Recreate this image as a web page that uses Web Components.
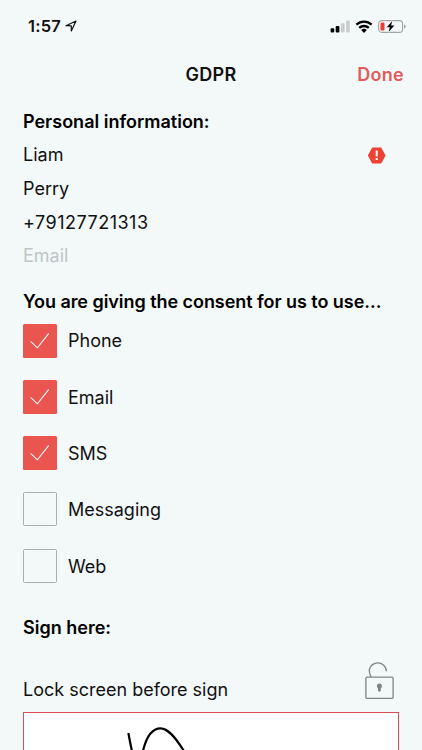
<!DOCTYPE html>
<html lang="en">
<head>
<meta charset="utf-8">
<title>GDPR</title>
<style>
  html, body {
    margin: 0;
    height: 750px;
    overflow: hidden;
    background: #f3f8f9;
  }
</style>
</head>
<body>
<gdpr-screen></gdpr-screen>

<script>
class StatusBar extends HTMLElement {
  constructor() {
    super();
    this.attachShadow({ mode: "open" });
  }

  static get styles() {
    return /* css */`
      :host {
        display: flex;
        justify-content: space-between;
        height: 52px;
        padding: 0 16px 0 28px;
        box-sizing: border-box;
        font-size: 16.5px;
        font-weight: 600;
        letter-spacing: 0.2px;
      }

      .time, .icons {
        display: flex;
        align-items: center;
      }

      .time { gap: 4px; }
      .icons { gap: 5px; }
      svg { display: block; }
    `;
  }

  connectedCallback() {
    this.render();
  }

  render() {
    this.shadowRoot.innerHTML = /* html */`
    <style>${StatusBar.styles}</style>
    <div class="time">
      <span>1:57</span>
      <svg width="12" height="12" viewBox="0 0 12 12" fill="none" stroke="#111" stroke-width="1.2" stroke-linejoin="round">
        <path d="M1 5.7 11 1 6.3 11V5.8Z"/>
      </svg>
    </div>
    <div class="icons">
      <svg width="20" height="13" viewBox="0 0 20 13">
        <rect x="0.6" y="8.3" width="3.6" height="4.2" rx="1"/>
        <rect x="5.7" y="6" width="3.7" height="6.5" rx="1"/>
        <rect x="10.9" y="3.3" width="3.7" height="9.2" rx="1" fill="#c9cdce"/>
        <rect x="16.1" y="0.5" width="3.7" height="12" rx="1" fill="#c9cdce"/>
      </svg>
      <svg width="18" height="13" viewBox="0 0 18 13" fill="none" stroke="#000" stroke-width="2.3">
        <path d="M1.4 4.7a11 11 0 0 1 15.2 0"/>
        <path d="M4.2 7.9a7 7 0 0 1 9.6 0"/>
        <path d="M6.2 10.1a4.1 4.1 0 0 1 5.6 0L9 12.9Z" fill="#000" stroke="none"/>
      </svg>
      <svg width="28" height="13" viewBox="0 0 28 13">
        <rect x="0.6" y="0.6" width="24" height="11.8" rx="3.4" fill="none" stroke="#a0a4a5" stroke-width="1.1"/>
        <path d="M26 4.4q1.7.6 1.7 2.1T26 8.6Z" fill="#a0a4a5"/>
        <rect x="2.5" y="2.5" width="4" height="8" rx="1.2" fill="#f23a31"/>
        <path d="M14.2.9 8.8 7.3h3l-1.1 4.8 5.6-6.6h-3.2Z" stroke="#f3f8f9" stroke-width="1.6" paint-order="stroke"/>
      </svg>
    </div>`;
  }
}

class NavBar extends HTMLElement {
  constructor() {
    super();
    this.attachShadow({ mode: "open" });
  }

  static get styles() {
    return /* css */`
      :host {
        display: grid;
        grid-template-columns: 1fr auto 1fr;
        align-items: center;
        height: 45px;
        padding: 0 18px;
        font-size: 18px;
        font-weight: 600;
      }

      .title {
        grid-column: 2;
        letter-spacing: 0.3px;
      }

      .action {
        justify-self: end;
        color: #e25b5a;
        letter-spacing: 0.3px;
      }
    `;
  }

  connectedCallback() {
    this.render();
  }

  render() {
    this.shadowRoot.innerHTML = /* html */`
    <style>${NavBar.styles}</style>
    <span class="title"><slot></slot></span>
    <span class="action"><slot name="action"></slot></span>`;
  }
}

class FormText extends HTMLElement {
  constructor() {
    super();
    this.attachShadow({ mode: "open" });
  }

  static get styles() {
    return /* css */`
      :host {
        display: flex;
        align-items: center;
        justify-content: space-between;
        height: 33.6px;
        white-space: nowrap;
      }

      :host([heading]) {
        font-weight: 600;
        color: #000;
      }

      :host([numeric]) { letter-spacing: 0.5px; }

      :host([placeholder]) { color: #c0c5c6; }
    `;
  }

  connectedCallback() {
    this.render();
  }

  render() {
    this.shadowRoot.innerHTML = /* html */`
    <style>${FormText.styles}</style>
    <span><slot></slot></span>
    <slot name="end"></slot>`;
  }
}

class AlertIcon extends HTMLElement {
  constructor() {
    super();
    this.attachShadow({ mode: "open" });
  }

  connectedCallback() {
    this.shadowRoot.innerHTML = /* html */`
    <style>
      :host { display: block; margin-right: 13px; }
      svg { display: block; }
    </style>
    <svg width="19" height="17" viewBox="0 0 19 17">
      <path d="M5.7 1.2h8L17.8 8.5l-4.1 7.3h-8L1.6 8.5Z" fill="#ed4133" stroke="#ed4133" stroke-width="1.4" stroke-linejoin="round"/>
      <path d="M9.7 3.6v6M9.7 11v2" stroke="#fff" stroke-width="2"/>
    </svg>`;
  }
}

class ConsentCheck extends HTMLElement {
  constructor() {
    super();
    this.attachShadow({ mode: "open" });
  }

  static get styles() {
    return /* css */`
      :host {
        display: flex;
        align-items: center;
        gap: 11px;
        height: 34px;
      }

      .box {
        width: 34px;
        height: 34px;
        box-sizing: border-box;
        border: 1px solid #a9aeaf;
        border-radius: 1.5px;
      }

      .label { padding-top: 1.8px; }

      svg { display: none; }

      :host([checked]) {
        .box {
          border: 0;
          background: #ea5550;
        }

        svg { display: block; }
      }
    `;
  }

  connectedCallback() {
    this.render();
  }

  render() {
    this.shadowRoot.innerHTML = /* html */`
    <style>${ConsentCheck.styles}</style>
    <div class="box">
      <svg width="34" height="34" viewBox="0 0 34 34" fill="none" stroke="#fff" stroke-width="1.1">
        <path d="M7.6 17.4 14.4 23.8 25.8 9.4"/>
      </svg>
    </div>
    <span class="label"><slot></slot></span>`;
  }
}

class LockIcon extends HTMLElement {
  constructor() {
    super();
    this.attachShadow({ mode: "open" });
  }

  connectedCallback() {
    this.shadowRoot.innerHTML = /* html */`
    <style>
      :host { display: block; margin-right: 4px; }
      svg { display: block; }
    </style>
    <svg width="30" height="40" viewBox="0 0 30 40" fill="none" stroke="#7f8586" stroke-width="1.3">
      <rect x="0.9" y="17.1" width="27.2" height="21.3" rx="1.2"/>
      <path d="M6 17C4.9 14.6 4.2 12.3 4.2 9.8A8.7 8.7 0 0 1 21.4 11.2"/>
      <circle cx="14.4" cy="26" r="2.5" fill="#7f8586" stroke="none"/>
      <path d="M14.4 26.5v3.8" stroke-width="2.8" stroke-linecap="round"/>
    </svg>`;
  }
}

class SignaturePad extends HTMLElement {
  constructor() {
    super();
    this.attachShadow({ mode: "open" });
  }

  connectedCallback() {
    this.shadowRoot.innerHTML = /* html */`
    <style>
      :host {
        display: block;
        height: 200px;
        box-sizing: border-box;
        border: 1px solid #dc4e51;
        background: #fff;
      }

      svg { display: block; }
    </style>
    <svg width="374" height="60" viewBox="24 713 374 60" fill="none" stroke="#000" stroke-width="2.2">
      <path d="M128.4 733 C129.5 739 130.5 745 132 751C136 775 139 770 143.2 750C147 735 153 728.4 160.5 728.4C168 728.4 175 737 183.3 750L192 765"/>
    </svg>`;
  }
}

class GdprScreen extends HTMLElement {
  constructor() {
    super();
    this.attachShadow({ mode: "open" });
  }

  static get styles() {
    return /* css */`
      :host {
        display: block;
        width: 422px;
        height: 750px;
        overflow: hidden;
        color: #111;
        font: 400 18px/22px Inter, "Liberation Sans", sans-serif;
      }

      main {
        display: flex;
        flex-direction: column;
        padding: 8px 23px 0;
      }

      .consents {
        display: grid;
        gap: 22.3px;
        margin: 5px 0 28.4px;
      }

      .consent-title {
        margin-top: 12px;
        letter-spacing: -0.05px;
      }

      .lock-row {
        height: 44px;
        display: flex;
        justify-content: space-between;
        align-items: flex-end;
        margin: 15px 0 8.2px;
      }

      .lock-row span { padding-bottom: 3px; }
      .lock-row lock-icon { padding-bottom: 3.5px; }
    `;
  }

  connectedCallback() {
    this.render();
  }

  render() {
    this.shadowRoot.innerHTML = /* html */`
    <style>${GdprScreen.styles}</style>
    <status-bar></status-bar>
    <nav-bar>GDPR<span slot="action">Done</span></nav-bar>
    <main>
      <form-text heading>Personal information:</form-text>
      <form-text>Liam<alert-icon slot="end"></alert-icon></form-text>
      <form-text>Perry</form-text>
      <form-text numeric>+79127721313</form-text>
      <form-text placeholder>Email</form-text>
      <form-text heading class="consent-title">You are giving the consent for us to use...</form-text>
      <div class="consents">
        <consent-check checked>Phone</consent-check>
        <consent-check checked>Email</consent-check>
        <consent-check checked>SMS</consent-check>
        <consent-check>Messaging</consent-check>
        <consent-check>Web</consent-check>
      </div>
      <form-text heading>Sign here:</form-text>
      <div class="lock-row">
        <span>Lock screen before sign</span>
        <lock-icon></lock-icon>
      </div>
      <signature-pad></signature-pad>
    </main>`;
  }
}

customElements.define("status-bar", StatusBar);
customElements.define("nav-bar", NavBar);
customElements.define("form-text", FormText);
customElements.define("alert-icon", AlertIcon);
customElements.define("consent-check", ConsentCheck);
customElements.define("lock-icon", LockIcon);
customElements.define("signature-pad", SignaturePad);
customElements.define("gdpr-screen", GdprScreen);
</script>
</body>
</html>
